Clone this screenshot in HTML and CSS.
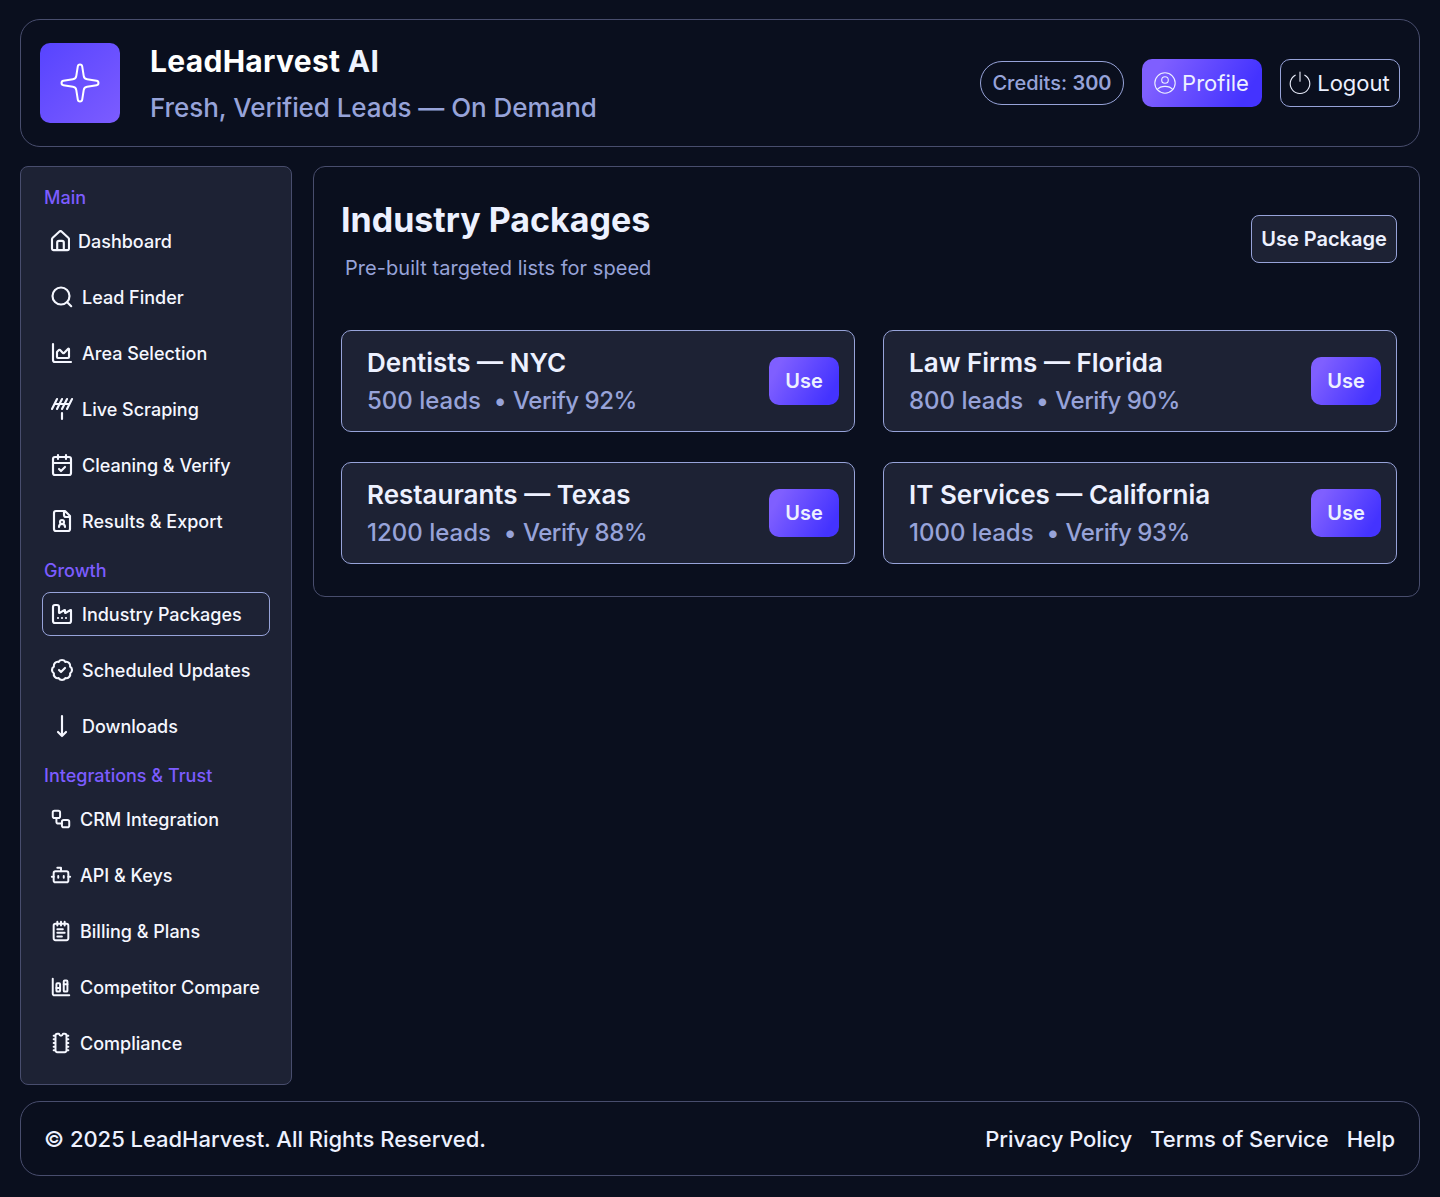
FILE: index.html
```html
<!DOCTYPE html>
<html lang="en">
<head>
<meta charset="utf-8">
<title>LeadHarvest AI</title>
<link rel="stylesheet" href="styles.css">
</head>
<body>
<div class="page">
  <header class="topbar">
    <div class="logo">
      <svg width="40" height="40" viewBox="0 0 40 40"><path d="M17.8 3.4C18.2 .9 21.8 .9 22.2 3.4L23.7 12.9C24 14.9 25.1 16 27.1 16.3L36.6 17.8C39.1 18.2 39.1 21.8 36.6 22.2L27.1 23.7C25.1 24 24 25.1 23.7 27.1L22.2 36.6C21.8 39.1 18.2 39.1 17.8 36.6L16.3 27.1C16 25.1 14.9 24 12.9 23.7L3.4 22.2C.9 21.8 .9 18.2 3.4 17.8L12.9 16.3C14.9 16 16 14.9 16.3 12.9Z"/></svg>
    </div>
    <div class="brand">
      <div class="brand-name">LeadHarvest <span>AI</span></div>
      <div class="brand-tag">Fresh, Verified Leads — On Demand</div>
    </div>
    <div class="actions">
      <div class="credits">Credits: <b>300</b></div>
      <button class="btn btn-profile">
        <svg class="thin" width="24" height="24" viewBox="0 0 24 24"><circle cx="12" cy="12" r="10.2"/><circle cx="12" cy="9" r="3.3"/><path d="M4.2 18.6C6 16.4 9 15.4 12 15.4S18 16.4 19.8 18.6"/></svg>
        <span>Profile</span>
      </button>
      <button class="btn btn-logout">
        <svg class="thin" width="24" height="24" viewBox="0 0 24 24"><path d="M12 1v9.3M7.2 4.2a9.8 9.8 0 1 0 9.6 0"/></svg>
        <span>Logout</span>
      </button>
    </div>
  </header>

  <div class="body">
    <nav class="sidebar">
      <h3 class="group">Main</h3>
      <a class="item item-home"><svg width="20" height="22" viewBox="0 0 20 22"><path d="M2 9.2a2 2 0 0 1 .7-1.5L9.2 1.7a1.9 1.9 0 0 1 2.600 0l6.500 6a2 2 0 0 1 .7 1.500V18.500a1.600 1.600 0 0 1-1.600 1.600H3.600A1.600 1.600 0 0 1 2 18.500ZM7.200 20v-7.400a1.800 1.800 0 0 1 1.800-1.800h3a1.800 1.800 0 0 1 1.800 1.800V20"/></svg>Dashboard</a>
      <a class="item"><svg width="24" height="24" viewBox="0 0 24 24"><circle cx="11" cy="11" r="8.500"/><path d="m21.200 21.200-4-4"/></svg>Lead Finder</a>
      <a class="item"><svg width="24" height="24" viewBox="0 0 24 24"><path d="M3 3v16a2 2 0 0 0 2 2h16"/><path d="M7 11.207a.5.5 0 0 1 .146-.353l2-2a.5.5 0 0 1 .708 0l3.292 3.292a.5.5 0 0 0 .708 0l4.292-4.292a.5.5 0 0 1 .854.353V16a1 1 0 0 1-1 1H8a1 1 0 0 1-1-1z"/></svg>Area Selection</a>
      <a class="item"><svg width="24" height="24" viewBox="0 0 24 24"><path d="M2 12 7 2M7 12l5-10M12 12l5-10M17 12l5-10M4.500 7h15M12 16v6"/></svg>Live Scraping</a>
      <a class="item"><svg width="24" height="24" viewBox="0 0 24 24"><path d="M8 2v4M16 2v4M3 10h18M9 16l2 2 4-4"/><rect x="3" y="4" width="18" height="18" rx="2"/></svg>Cleaning &amp; Verify</a>
      <a class="item"><svg width="24" height="24" viewBox="0 0 24 24"><path d="M14 2v4a2 2 0 0 0 2 2h4M15 18a3 3 0 1 0-6 0M15 2H6a2 2 0 0 0-2 2v16a2 2 0 0 0 2 2h12a2 2 0 0 0 2-2V7z"/><circle cx="12" cy="13" r="2"/></svg>Results &amp; Export</a>

      <h3 class="group">Growth</h3>
      <a class="item active"><svg width="24" height="24" viewBox="0 0 24 24"><path d="M12 16h.01M16 16h.01M8 16h.01M3 19a2 2 0 0 0 2 2h14a2 2 0 0 0 2-2V8.500a.5.5 0 0 0-.769-.422l-4.462 2.844A.5.5 0 0 1 15 10.500v-2a.5.5 0 0 0-.769-.422L9.770 10.922A.5.5 0 0 1 9 10.500V5a2 2 0 0 0-2-2H5a2 2 0 0 0-2 2z"/></svg>Industry Packages</a>
      <a class="item"><svg width="24" height="24" viewBox="0 0 24 24"><path d="M3.850 8.620a4 4 0 0 1 4.780-4.770 4 4 0 0 1 6.740 0 4 4 0 0 1 4.780 4.780 4 4 0 0 1 0 6.740 4 4 0 0 1-4.770 4.780 4 4 0 0 1-6.750 0 4 4 0 0 1-4.780-4.770 4 4 0 0 1 0-6.760ZM9 12l2 2 4-4"/></svg>Scheduled Updates</a>
      <a class="item"><svg width="24" height="24" viewBox="0 0 24 24"><path d="M8 18l4 4 4-4M12 2v20"/></svg>Downloads</a>

      <h3 class="group">Integrations &amp; Trust</h3>
      <a class="item"><svg width="22" height="22" viewBox="0 0 24 24"><rect x="3" y="3" width="8" height="8" rx="2"/><path d="M7 11v4a2 2 0 0 0 2 2h4"/><rect x="13" y="13" width="8" height="8" rx="2"/></svg>CRM Integration</a>
      <a class="item"><svg width="22" height="22" viewBox="0 0 24 24"><path d="M12 8V4H8M2 14h2M20 14h2M15 13v2M9 13v2"/><rect x="4" y="8" width="16" height="12" rx="2"/></svg>API &amp; Keys</a>
      <a class="item"><svg width="22" height="22" viewBox="0 0 24 24"><path d="M8 2v4M12 2v4M16 2v4M8 10h6M8 14h8M8 18h5"/><rect x="4" y="4" width="16" height="18" rx="2"/></svg>Billing &amp; Plans</a>
      <a class="item"><svg width="22" height="22" viewBox="0 0 24 24"><path d="M11 13H7M19 9h-4M3 3v16a2 2 0 0 0 2 2h16"/><rect x="15" y="5" width="4" height="12" rx="1"/><rect x="7" y="8" width="4" height="9" rx="1"/></svg>Competitor Compare</a>
      <a class="item"><svg width="22" height="22" viewBox="0 0 24 24"><path d="M18 12h2M18 16h2M18 20h2M18 4h2M18 8h2M4 12h2M4 16h2M4 20h2M4 4h2M4 8h2M8 2a2 2 0 0 0-2 2v16a2 2 0 0 0 2 2h8a2 2 0 0 0 2-2V4a2 2 0 0 0-2-2h-1.500c-.276 0-.494.227-.562.495a2 2 0 0 1-3.876 0C9.994 2.227 9.776 2 9.500 2z"/></svg>Compliance</a>
    </nav>

    <main class="panel">
      <div class="panel-head">
        <div>
          <h1 class="title">Industry Packages</h1>
          <p class="subtitle">Pre-built targeted lists for speed</p>
        </div>
        <button class="btn btn-package">Use Package</button>
      </div>
      <div class="cards">
        <section class="card">
          <div><h2 class="card-title">Dentists — NYC</h2><p class="card-meta">500 leads  • <span>Verify 92%</span></p></div>
          <button class="btn btn-use">Use</button>
        </section>
        <section class="card">
          <div><h2 class="card-title">Law Firms — Florida</h2><p class="card-meta">800 leads  • <span>Verify 90%</span></p></div>
          <button class="btn btn-use">Use</button>
        </section>
        <section class="card">
          <div><h2 class="card-title">Restaurants — Texas</h2><p class="card-meta">1200 leads  • <span>Verify 88%</span></p></div>
          <button class="btn btn-use">Use</button>
        </section>
        <section class="card">
          <div><h2 class="card-title">IT Services — California</h2><p class="card-meta">1000 leads  • <span>Verify 93%</span></p></div>
          <button class="btn btn-use">Use</button>
        </section>
      </div>
    </main>
  </div>

  <footer class="footer">
    <span>© 2025 LeadHarvest. All Rights Reserved.</span>
    <div class="links"><a>Privacy Policy</a><a>Terms of Service</a><a>Help</a></div>
  </footer>
</div>
</body>
</html>
```

FILE: styles.css
```css
* { box-sizing: border-box; margin: 0; padding: 0; }

body {
  background: #0a0f1e;
  color: #edf1ff;
  font-family: Inter, "Liberation Sans", sans-serif;
  font-optical-sizing: none;
}

svg {
  flex: none;
  fill: none;
  stroke: currentColor;
  stroke-width: 2;
  stroke-linecap: round;
  stroke-linejoin: round;
}
svg.thin { stroke-width: 1.1; }

.page {
  width: 1440px;
  height: 1197px;
  padding: 19px 20px 21px;
  display: flex;
  flex-direction: column;
}

.topbar {
  height: 128px;
  padding: 0 19px;
  border: 1px solid #484d6d;
  border-radius: 20px;
  display: flex;
  align-items: center;
}
.logo {
  width: 80px;
  height: 80px;
  border-radius: 10px;
  background: linear-gradient(135deg, #5744ff, #7c5cff);
  color: #fff;
  display: flex;
  align-items: center;
  justify-content: center;
}
.brand { margin-left: 30px; padding-top: 3px; }
.brand-name {
  font-size: 30px;
  line-height: 46px;
  font-weight: 700;
  letter-spacing: 0.3px;
  color: #fff;
  white-space: nowrap;
}
.brand-name span { color: #edf3ff; }
.brand-tag {
  font-size: 26px;
  line-height: 47px;
  font-weight: 500;
  letter-spacing: -0.06px;
  color: #97a3d9;
  white-space: nowrap;
}
.actions {
  margin-left: auto;
  display: flex;
  align-items: center;
  gap: 18px;
}
.credits {
  width: 144px;
  height: 44px;
  border: 1px solid #97a3d9;
  border-radius: 22px;
  color: #97a3d9;
  font-size: 20px;
  font-weight: 500;
  line-height: 42px;
  text-align: center;
  white-space: nowrap;
}
.credits b { font-weight: 600; }

.btn {
  height: 48px;
  border: 0;
  border-radius: 10px;
  background: none;
  color: #edf1ff;
  font: 600 20px Inter, "Liberation Sans", sans-serif;
  display: flex;
  align-items: center;
  justify-content: center;
  white-space: nowrap;
}
.btn-profile, .btn-logout { width: 120px; padding-right: 2px; font-size: 22px; font-weight: 400; gap: 5px; }
.btn-profile, .btn-use { background: linear-gradient(120deg, #7f5fff 15%, #4433ff 85%); }
.btn-logout { border: 1px solid #97a3d9; }
.btn-package { width: 146px; border: 1px solid #97a3d9; border-radius: 8px; background: #1d2234; }
.btn-use { width: 70px; }

.body {
  margin-top: 19px;
  display: flex;
  align-items: flex-start;
  justify-content: space-between;
}

.sidebar {
  width: 272px;
  height: 919px;
  padding: 19px 21px;
  background: #1d2234;
  border: 1px solid #484d6d;
  border-radius: 8px;
}
.sidebar svg { stroke-width: 2.15; }
.group {
  margin: 16px 0 10px 2px;
  font-size: 18px;
  line-height: 23px;
  font-weight: 500;
  color: #7c5cff;
}
.group:first-child { margin-top: 0; }
.item {
  height: 44px;
  padding: 0 7px;
  border: 1px solid transparent;
  border-radius: 8px;
  display: flex;
  align-items: center;
  gap: 8px;
  color: #f5f7ff;
  font-size: 18px;
  font-weight: 500;
  white-space: nowrap;
}
.item + .item { margin-top: 12px; }
.item.active { border-color: #97a3d9; }

.panel {
  width: 1107px;
  height: 431px;
  padding: 27px 22px 0 27px;
  border: 1px solid #484d6d;
  border-radius: 12px;
}
.panel-head {
  height: 136px;
  display: flex;
  justify-content: space-between;
}
.title { font-size: 34px; line-height: 52px; font-weight: 700; white-space: nowrap; }
.subtitle { margin-left: 4px; font-size: 20px; line-height: 44px; letter-spacing: 0.04px; color: #97a3d9; white-space: nowrap; }
.btn-package { margin-top: 21px; }
.cards {
  display: grid;
  grid-template-columns: 1fr 1fr;
  gap: 30px 28px;
}
.card {
  height: 102px;
  padding: 2px 15px 0 25px;
  background: #1d2234;
  border: 1px solid #97a3d9;
  border-radius: 10px;
  display: flex;
  align-items: center;
  justify-content: space-between;
}
.card .btn { margin-bottom: 2px; }
.card-title { font-size: 26px; line-height: 38px; font-weight: 600; white-space: nowrap; }
.card-meta { font-size: 24px; line-height: 38px; font-weight: 500; color: #97a3d9; white-space: pre; }
.card-meta span { letter-spacing: -0.45px; }

.footer {
  margin-top: 16px;
  height: 75px;
  padding: 0 24px 0 23px;
  border: 1px solid #484d6d;
  border-radius: 20px;
  display: flex;
  align-items: center;
  justify-content: space-between;
  font-size: 22px;
  font-weight: 500;
  letter-spacing: -0.03px;
  white-space: nowrap;
}
.links { display: flex; gap: 18px; }
```
